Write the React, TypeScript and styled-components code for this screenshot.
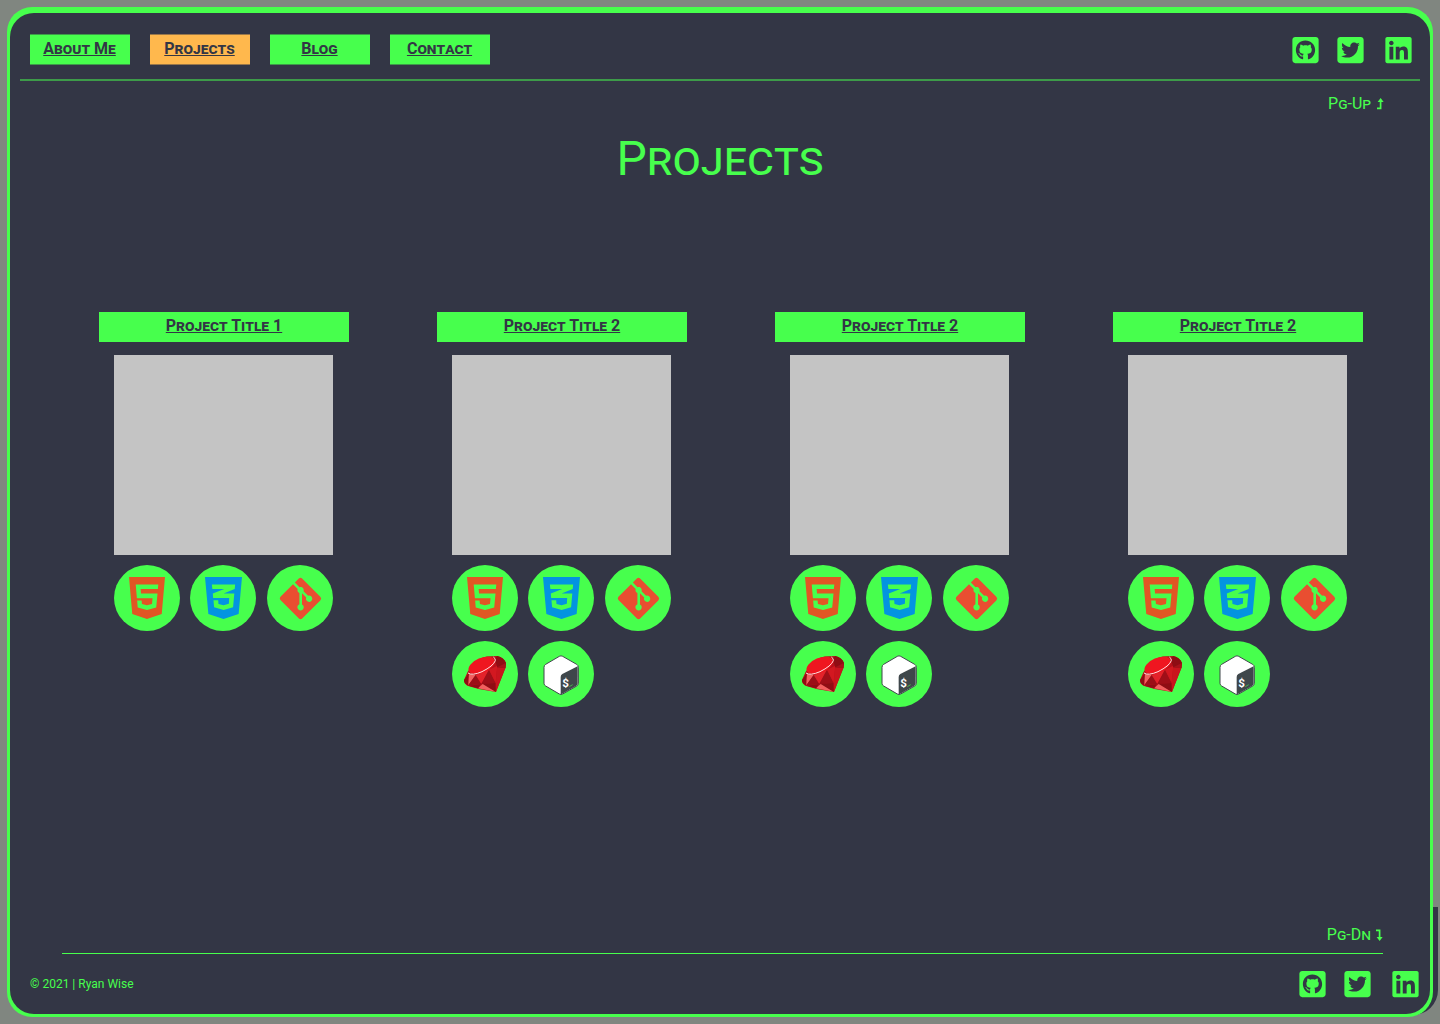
import React from "react";
import styled, { createGlobalStyle } from "styled-components";
import {
  FaCss3Alt,
  FaGitAlt,
  FaGithubSquare,
  FaHtml5,
  FaLinkedin,
  FaTwitterSquare,
} from "react-icons/fa";

const color = {
  backdrop: "#808680",
  panel: "#333645",
  green: "#47ff4d",
  greenDim: "#3d9b49",
  orange: "#ffb84d",
  orangeDim: "#99774a",
  placeholder: "#c4c4c4",
};

const GlobalStyle = createGlobalStyle`
  * {
    box-sizing: border-box;
  }

  body {
    margin: 0;
    background: ${color.backdrop};
    color: ${color.green};
    font-family: Roboto, "Liberation Sans", sans-serif;
    font-size: 16px;
  }

  ul {
    margin: 0;
    padding: 0;
    list-style: none;
  }
`;

const Page = styled.div`
  position: relative;
  isolation: isolate;
  display: flex;
  min-height: 100vh;
  padding: 7px;

  &::before {
    content: "";
    position: absolute;
    z-index: -1;
    right: 2px;
    bottom: 9px;
    width: 60px;
    height: 108px;
    border-radius: 0 0 25px 0;
    background: ${color.panel};
  }
`;

const Frame = styled.div`
  display: flex;
  flex: 1;
  padding: 6px 3px 3px;
  border-radius: 25px;
  background: ${color.green};
`;

const Panel = styled.div`
  display: flex;
  flex: 1;
  flex-direction: column;
  border-radius: 24px;
  background: ${color.panel};
`;

const Header = styled.header`
  display: flex;
  align-items: center;
  justify-content: space-between;
  margin: 0 10px;
  padding: 21px 8px 14px 10px;
  border-bottom: 2px solid ${color.greenDim};
`;

const NavList = styled.ul`
  display: flex;
  gap: 20px;
`;

const NavLink = styled.a<{ $active?: boolean }>`
  display: block;
  width: 100px;
  height: 31px;
  padding: 4px 1px 0 0;
  border: solid ${(p) => (p.$active ? color.orangeDim : color.greenDim)};
  border-width: 1px 0;
  background: ${(p) => (p.$active ? color.orange : color.green)};
  color: ${color.panel};
  font-variant: small-caps;
  font-weight: 700;
  line-height: 19px;
  text-align: center;
`;

const SocialList = styled.ul`
  display: grid;
  grid-template-columns: 45px 48px 27px;
`;

const SocialLink = styled.a`
  display: block;
  color: ${color.green};

  svg {
    display: block;
    width: 27px;
    height: 30px;
  }
`;

const Main = styled.main`
  display: flex;
  flex: 1;
  flex-direction: column;
`;

const Pager = styled.a`
  display: flex;
  align-items: center;
  align-self: flex-end;
  gap: 5px;
  margin-right: 46px;
  color: ${color.green};
  font-variant: small-caps;
  line-height: 20px;
  text-decoration: none;
`;

const TopPager = styled(Pager)`
  margin-top: 13px;
`;

const BottomPager = styled(Pager)`
  margin-top: auto;
  margin-bottom: 8px;
`;

const Heading = styled.h1`
  margin: 17px 0 125px;
  font-size: 48px;
  font-variant: small-caps;
  font-weight: 400;
  line-height: 56px;
  text-align: center;
`;

const ProjectGrid = styled.ul`
  display: grid;
  grid-template-columns: repeat(4, 250px);
  justify-content: space-between;
  padding: 0 67px 40px 89px;
`;

const ProjectTitle = styled.h2`
  margin: 0 0 13px;
  font-size: 16px;
  line-height: 19px;
`;

const ProjectLink = styled.a`
  display: block;
  height: 30px;
  padding-top: 4px;
  background: ${color.green};
  color: ${color.panel};
  font-variant: small-caps;
  font-weight: 700;
  text-align: center;
`;

const Preview = styled.div`
  height: 200px;
  margin: 0 16px 10px 15px;
  background: ${color.placeholder};
`;

const TechList = styled.ul`
  display: grid;
  grid-template-columns: 66px 67px 66px;
  gap: 10px;
  margin: 0 16px 0 15px;
`;

const TechBadge = styled.li<{ $tint: string }>`
  display: flex;
  align-items: center;
  justify-content: center;
  width: 66px;
  height: 66px;
  border-radius: 50%;
  background: ${color.green};
  color: ${(p) => p.$tint};
`;

const CssIcon = styled(FaCss3Alt)`
  width: 37px;
  height: 48px;
`;

const Footer = styled.footer`
  display: flex;
  flex-direction: column;
`;

const Rule = styled.hr`
  width: auto;
  height: 1px;
  margin: 0 47px 0 52px;
  border: 0;
  background: ${color.green};
`;

const FooterBar = styled.div`
  display: flex;
  align-items: center;
  justify-content: space-between;
  height: 60px;
  padding: 0 11px 0 20px;
`;

const Copyright = styled.small`
  font-size: 12px;
  line-height: 14px;
`;

function ArrowUp() {
  return (
    <svg width="8" height="12" viewBox="0 0 8 12" fill="none" aria-hidden="true">
      <path d="M1 10.3h3.6V3" stroke="currentColor" strokeWidth="1.7" />
      <path d="M4.6 0 7.6 4H1.6z" fill="currentColor" />
    </svg>
  );
}

function ArrowDown() {
  return (
    <svg width="8" height="12" viewBox="0 0 8 12" fill="none" aria-hidden="true">
      <path d="M0 1.3h3.6V9" stroke="currentColor" strokeWidth="1.7" />
      <path d="M3.6 12 6.6 8H.6z" fill="currentColor" />
    </svg>
  );
}

function RubyIcon() {
  return (
    <svg width="66" height="66" viewBox="0 0 198 198" aria-hidden="true">
      <path
        d="M36 117 47 92 68 63Q90 46 116 46L136 45Q155 50 162 66L160 82 132 153 80 144 46 134Q36 128 36 117Z"
        fill="#b5121b"
      />
      <path d="M36 117 50 98 48 133Q36 128 36 117Z" fill="#8f0d14" />
      <path d="M51 99 71 102 49 133Z" fill="#f2605f" />
      <path d="M71 102 49 133 88 129Z" fill="#9b0f17" />
      <path d="M71 102 111 86 88 129Z" fill="#e3222a" />
      <path d="M111 86 88 129 131 126Z" fill="#a00f18" />
      <path d="M88 129 131 126 131 152Z" fill="#8f0d14" />
      <path d="M111 86 136 74 131 126Z" fill="#d31820" />
      <path d="M136 74 161 78 132 152 131 126Z" fill="#c9151d" />
      <path d="M128 53 136 45Q156 50 162 66L160 80 136 79Z" fill="#8f0d14" />
      <path d="M136 79 161 66 160 82Z" fill="#a8121a" />
      <path d="M78 142 92 129 130 152Z" fill="#f2605f" />
      <path d="M49 134 86 130 78 142Z" fill="#8f0d14" />
      <ellipse
        cx="89"
        cy="73"
        rx="42"
        ry="22"
        transform="rotate(-23 89 73)"
        fill="#ef1620"
      />
      <path
        d="M48 96Q60 105 90 92 124 75 130 59 131 52 124 48"
        fill="none"
        stroke="#ffe3e3"
        strokeWidth="3"
      />
    </svg>
  );
}

function BashIcon() {
  return (
    <svg width="66" height="66" viewBox="0 -3 198 198" aria-hidden="true">
      <path
        d="M94 43Q99 40 104 43L146 67Q151 70 151 76V124Q151 129 146 132L104 156Q99 159 94 156L53 132Q48 129 48 124V76Q48 70 53 67Z"
        fill="#fff"
        stroke="#3f474b"
        strokeWidth="3"
      />
      <path
        d="M98 105Q98 99 103 96L149 73V124Q149 128 145 131L103 155 98 157Z"
        fill="#3f474b"
      />
      <text
        x="103"
        y="134"
        fill="#fff"
        fontFamily="Roboto, sans-serif"
        fontSize="35"
        fontWeight="700"
      >
        $
      </text>
      <path d="M124 134 134 128" stroke="#47b54d" strokeWidth="3" />
    </svg>
  );
}

type Tech = "html" | "css" | "git" | "ruby" | "bash";

const techs: Record<Tech, { name: string; tint: string; icon: React.ReactNode }> = {
  html: { name: "HTML5", tint: "#e15624", icon: <FaHtml5 size={48} /> },
  css: { name: "CSS3", tint: "#0394e0", icon: <CssIcon preserveAspectRatio="none" /> },
  git: { name: "Git", tint: "#e94e31", icon: <FaGitAlt size={47} /> },
  ruby: { name: "Ruby", tint: "#b5121b", icon: <RubyIcon /> },
  bash: { name: "Bash", tint: "#3f474b", icon: <BashIcon /> },
};

const pages = ["About Me", "Projects", "Blog", "Contact"];

const projects: { id: number; title: string; stack: Tech[] }[] = [
  { id: 1, title: "Project Title 1", stack: ["html", "css", "git"] },
  { id: 2, title: "Project Title 2", stack: ["html", "css", "git", "ruby", "bash"] },
  { id: 3, title: "Project Title 2", stack: ["html", "css", "git", "ruby", "bash"] },
  { id: 4, title: "Project Title 2", stack: ["html", "css", "git", "ruby", "bash"] },
];

function Socials() {
  return (
    <SocialList>
      <li>
        <SocialLink href="#github" aria-label="GitHub">
          <FaGithubSquare />
        </SocialLink>
      </li>
      <li>
        <SocialLink href="#twitter" aria-label="Twitter">
          <FaTwitterSquare />
        </SocialLink>
      </li>
      <li>
        <SocialLink href="#linkedin" aria-label="LinkedIn">
          <FaLinkedin />
        </SocialLink>
      </li>
    </SocialList>
  );
}

export default function App() {
  return (
    <Page>
      <GlobalStyle />
      <Frame>
        <Panel>
          <Header>
            <nav>
              <NavList>
                {pages.map((page) => (
                  <li key={page}>
                    <NavLink
                      href={`#${page.toLowerCase().replace(" ", "-")}`}
                      $active={page === "Projects"}
                      aria-current={page === "Projects" ? "page" : undefined}
                    >
                      {page}
                    </NavLink>
                  </li>
                ))}
              </NavList>
            </nav>
            <Socials />
          </Header>
          <Main>
            <TopPager href="#previous">
              Pg-Up <ArrowUp />
            </TopPager>
            <Heading>Projects</Heading>
            <ProjectGrid>
              {projects.map((project) => (
                <li key={project.id}>
                  <ProjectTitle>
                    <ProjectLink href={`#project-${project.id}`}>{project.title}</ProjectLink>
                  </ProjectTitle>
                  <Preview />
                  <TechList>
                    {project.stack.map((key) => (
                      <TechBadge key={key} $tint={techs[key].tint} aria-label={techs[key].name}>
                        {techs[key].icon}
                      </TechBadge>
                    ))}
                  </TechList>
                </li>
              ))}
            </ProjectGrid>
            <BottomPager href="#next">
              Pg-Dn <ArrowDown />
            </BottomPager>
          </Main>
          <Footer>
            <Rule />
            <FooterBar>
              <Copyright>© 2021 | Ryan Wise</Copyright>
              <Socials />
            </FooterBar>
          </Footer>
        </Panel>
      </Frame>
    </Page>
  );
}
